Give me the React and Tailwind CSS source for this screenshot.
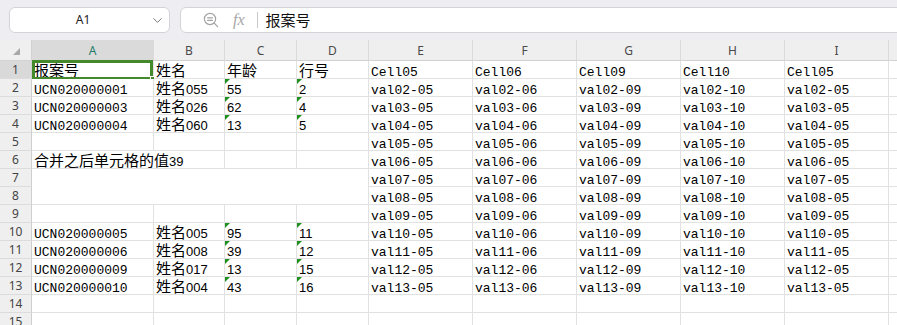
import React from 'react'
import { ChevronDown } from 'lucide-react'

const COLS = ['A', 'B', 'C', 'D', 'E', 'F', 'G', 'H', 'I']
const TAILS = ['05', '06', '09', '10', '05']

const LEFT = {
  1: ['报案号', '姓名', '年龄', '行号'],
  2: ['UCN020000001', '姓名055', '55', '2'],
  3: ['UCN020000003', '姓名026', '62', '4'],
  4: ['UCN020000004', '姓名060', '13', '5'],
  10: ['UCN020000005', '姓名005', '95', '11'],
  11: ['UCN020000006', '姓名008', '39', '12'],
  12: ['UCN020000009', '姓名017', '13', '15'],
  13: ['UCN020000010', '姓名004', '43', '16'],
}

const CJK = /([\u3400-\u9fff]+)/

// Excel-ish look: CJK in a sans at 15px, plain numbers in sans, the rest in mono
function CellText({ text }) {
  if (!text) return null
  if (CJK.test(text)) {
    return (
      <span className="font-['Liberation_Sans','Noto_Sans_CJK_SC',sans-serif]">
        {text.split(CJK).map((part, i) =>
          CJK.test(part)
            ? <span key={i} className="text-[15px] font-['Noto_Sans_CJK_SC',sans-serif]">{part}</span>
            : <span key={i}>{part}</span>
        )}
      </span>
    )
  }
  if (/^\d+$/.test(text)) {
    return <span className="inline-block pt-[1.5px] font-['Liberation_Sans',sans-serif]">{text}</span>
  }
  return <span className="inline-block pt-[2.5px] font-['Liberation_Mono',monospace]">{text}</span>
}

function Cell({ text, flag, selected, span }) {
  const spanClass =
    span === 'wide' ? 'col-span-2' : span === 'block' ? 'col-span-4 row-span-2' : ''
  return (
    <div className={`relative whitespace-nowrap border-r border-b border-[#e1e1e1] bg-white pl-[2px] text-[13px] leading-[18px] text-black ${spanClass}`}>
      {flag && (
        <div className="absolute left-0 top-0 h-0 w-0 border-t-[5px] border-r-[5px] border-t-[#1f8f1f] border-r-transparent" />
      )}
      <CellText text={text} />
      {selected && (
        <>
          <div className="pointer-events-none absolute -top-[1px] left-0 right-0 -bottom-[2px] border-[3px] border-[#44892b]" />
          <div className="absolute -right-[3px] -bottom-[4px] h-[6px] w-[6px] border border-white bg-[#44892b]" />
        </>
      )}
    </div>
  )
}

function RowHeader({ n, active }) {
  return (
    <div className={`flex items-center justify-center border-r border-b border-r-[#cfcfcf] border-b-[#dcdcdc] text-[12px] font-['Noto_Sans',sans-serif] text-[#444] ${active ? 'bg-[#d9d9d9]' : 'bg-[#efefef]'}`}>
      {n}
    </div>
  )
}

function Toolbar() {
  return (
    <div className="flex h-[40px] items-start gap-[10px] bg-[#eeedf2] pl-[9px] pt-[7px]">
      <div className="flex h-[26px] w-[161px] items-center rounded-md border border-[#d4d3d8] bg-white">
        <span className="flex-1 pl-[6px] text-center text-[12px] font-['Noto_Sans',sans-serif] text-[#222]">A1</span>
        <ChevronDown size={15} strokeWidth={1.4} className="mr-[4px] text-[#666]" />
      </div>
      <div className="-mr-3 flex h-[26px] flex-1 items-center rounded-l-md border border-[#d4d3d8] bg-white pl-[22px]">
        <svg width="16" height="16" viewBox="0 0 16 16" fill="none" stroke="#a3a3a3" strokeWidth="1.2" strokeLinecap="round">
          <circle cx="7" cy="7" r="5.6" />
          <line x1="4.6" y1="5.8" x2="9.4" y2="5.8" />
          <line x1="4.6" y1="8.4" x2="9.4" y2="8.4" />
          <line x1="11.2" y1="11.2" x2="14.6" y2="14.6" />
        </svg>
        <span className="ml-[14px] text-[16px] italic font-['Liberation_Serif',serif] text-[#a6a6a6]">fx</span>
        <div className="ml-[12px] h-[16px] w-px bg-[#c9c9c9]" />
        <span className="ml-[8px] text-[15px] font-['Noto_Sans_CJK_SC',sans-serif] text-[#111]">报案号</span>
      </div>
    </div>
  )
}

function Sheet() {
  const body = []
  for (let r = 1; r <= 15; r++) {
    body.push(<RowHeader key={`h${r}`} n={r} active={r === 1} />)
    const left = LEFT[r]
    if (r === 6) {
      body.push(<Cell key={`a${r}`} text="合并之后单元格的值39" span="wide" />)
      body.push(<Cell key={`c${r}`} />)
      body.push(<Cell key={`d${r}`} />)
    } else if (r === 7) {
      body.push(<Cell key={`a${r}`} span="block" />)
    } else if (r !== 8) {
      for (let c = 0; c < 4; c++) {
        const isFlag = left && r !== 1 && c >= 2
        body.push(
          <Cell key={`${c}-${r}`} text={left ? left[c] : ''} flag={isFlag} selected={r === 1 && c === 0} />
        )
      }
    }
    TAILS.forEach((t, i) => {
      let text = ''
      if (r === 1) text = `Cell${t}`
      else if (r <= 13) text = `val${String(r).padStart(2, '0')}-${t}`
      body.push(<Cell key={`e${i}-${r}`} text={text} />)
    })
    body.push(<div key={`z${r}`} className="border-b border-[#e1e1e1] bg-white" />)
  }

  return (
    <div className="grid grid-cols-[32px_122px_71px_72px_72px_104px_104px_104px_104px_104px_1fr] grid-rows-[21px_repeat(15,18px)]">
      <div className="flex items-end justify-center border-r border-b border-[#d2d2d2] bg-[#efefef] pb-[5px] pl-[2px]">
        <svg width="7" height="7" viewBox="0 0 7 7">
          <polygon points="7,0 7,7 0,7" fill="#a8a8a8" />
        </svg>
      </div>
      {COLS.map((c) => (
        <div
          key={c}
          className={`flex items-center justify-center border-r border-b border-r-[#dadada] border-b-[#d2d2d2] pt-[2px] text-[12px] font-['Noto_Sans',sans-serif] ${c === 'A' ? 'bg-[#dadada] text-[#1f7a68]' : 'bg-[#efefef] text-[#4a4a4a]'}`}
        >
          {c}
        </div>
      ))}
      <div className="border-b border-[#d2d2d2] bg-[#efefef]" />
      {body}
    </div>
  )
}

export default function App() {
  return (
    <div className="h-[325px] w-[897px] overflow-hidden bg-white">
      <Toolbar />
      <Sheet />
    </div>
  )
}
